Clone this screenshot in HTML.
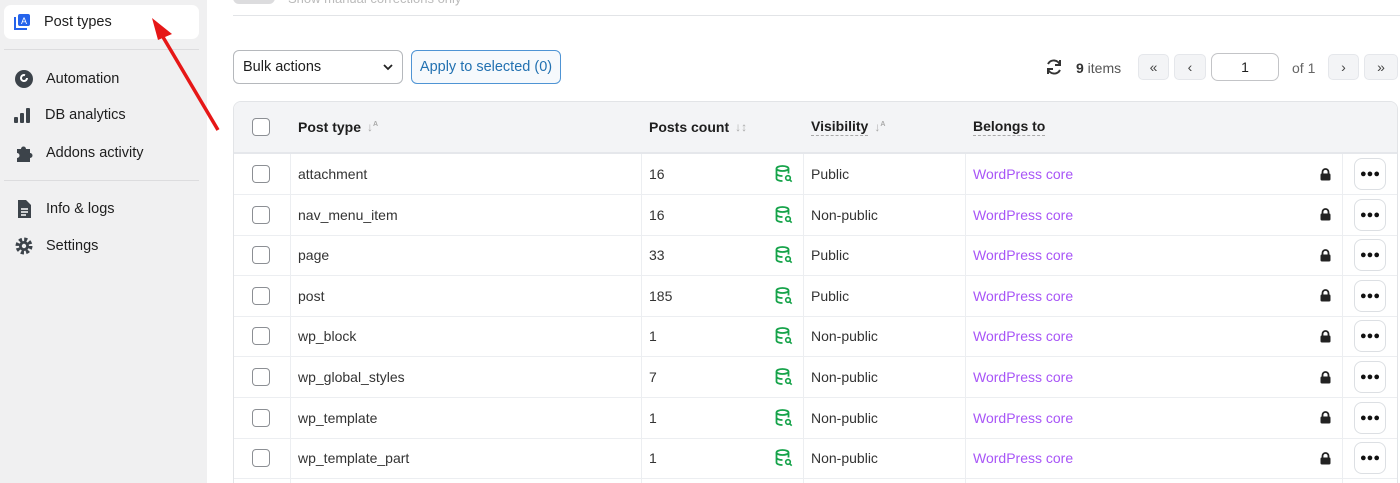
<!DOCTYPE html>
<html><head><meta charset="utf-8"><style>
*{box-sizing:border-box;margin:0;padding:0}
html,body{width:1400px;height:483px;overflow:hidden}
body{background:#fff;font-family:"Liberation Sans",sans-serif;color:#1e1e1e;font-size:14px;position:relative}
.sb{position:absolute;left:0;top:0;width:207px;height:483px;background:#f0f0f1;overflow:hidden}
.it{position:absolute;left:14px;display:flex;align-items:center;font-size:14.5px;color:#1e1e1e}
.it svg{margin-right:12px}
.sep{position:absolute;left:4px;width:195px;height:1px;background:#dcdcde}
.tbl{position:absolute;left:233px;top:101px;width:1165px;height:440px;border:1px solid #e2e4e7;border-radius:8px;overflow:hidden}
.hdr{position:absolute;left:0;top:0;width:100%;height:52px;background:#f3f4f6;border-bottom:2px solid #e5e7eb}
.row{position:absolute;left:0;width:100%;height:41px;border-bottom:1px solid #eceef1}
.c{position:absolute;top:0;height:100%;display:flex;align-items:center;font-size:14px;color:#333}
.cb{width:18px;height:18px;border:1.5px solid #8c8f94;border-radius:4px;background:#fff}
.th{font-weight:bold;color:#1e1e1e;font-size:14px}
.ul{border-bottom:1px dashed #aaa;padding-bottom:1px}
.vl{position:absolute;top:52px;bottom:0;width:1px;background:#eceef1}
.wp{color:#a855f7;font-weight:500}
.dots{position:absolute;left:1120px;width:32px;height:32px;border:1px solid #dcdfe3;border-radius:8px;display:flex;align-items:center;justify-content:center;font-weight:bold;font-size:11px;letter-spacing:0px;color:#111}
.pb{position:absolute;top:54px;height:26px;background:#f3f4f6;border:1px solid #e5e7eb;border-radius:5px;display:flex;align-items:center;justify-content:center;font-size:14px;color:#444}
</style></head><body>
<div class="sb">
 <div style="position:absolute;left:4px;top:5px;width:195px;height:34px;background:#fff;border-radius:7px"></div>
 <div class="it" style="top:13px"><svg width="18" height="18" viewBox="0 0 18 18"><rect x="4" y="1" width="12" height="12" rx="2" fill="#2563eb"/><text x="10" y="11" font-size="9" fill="#fff" text-anchor="middle" font-family="Liberation Sans">A</text><path d="M1 4v12h12" stroke="#2563eb" stroke-width="2" fill="none"/></svg><span>Post types</span></div>
 <div class="sep" style="top:49px"></div>
 <div class="it" style="top:69px"><svg width="20" height="20" viewBox="0 0 20 20"><circle cx="10" cy="10" r="9" fill="#3c434a"/><path d="M13 9a3 3 0 1 1-2-2.8" stroke="#fff" stroke-width="2" fill="none"/></svg><span>Automation</span></div>
 <div class="it" style="top:106px"><svg width="19" height="18" viewBox="0 0 19 18"><rect x="0" y="11" width="4" height="6" rx="1" fill="#3c434a"/><rect x="6" y="7" width="4" height="10" rx="1" fill="#3c434a"/><rect x="12" y="2" width="4" height="15" rx="1" fill="#3c434a"/></svg><span>DB analytics</span></div>
 <div class="it" style="top:143px"><svg width="20" height="20" viewBox="0 0 20 20"><path d="M3 6h4a2.5 2.5 0 1 1 5 0h4v4a2.5 2.5 0 1 1 0 5v4H3v-4a2.5 2.5 0 1 0 0-5z" fill="#3c434a"/></svg><span>Addons activity</span></div>
 <div class="sep" style="top:180px"></div>
 <div class="it" style="top:199px"><svg width="20" height="20" viewBox="0 0 20 20"><path d="M4 1h8l5 5v13H4z" fill="#3c434a"/><path d="M7 10h7M7 13h7M7 16h5" stroke="#fff" stroke-width="1.5"/></svg><span>Info &amp; logs</span></div>
 <div class="it" style="top:236px"><svg width="20" height="20" viewBox="0 0 20 20"><circle cx="10" cy="10" r="6.5" fill="none" stroke="#3c434a" stroke-width="4" stroke-dasharray="3 2.1"/><circle cx="10" cy="10" r="5" fill="#3c434a"/><circle cx="10" cy="10" r="2.2" fill="#f0f0f1"/></svg><span>Settings</span></div>
</div>
<div style="position:absolute;left:233px;top:-8px;width:42px;height:12px;border-radius:6px;background:#dcdcde"></div>
<div style="position:absolute;left:288px;top:-9px;font-size:13px;color:#bbb">Show manual corrections only</div>
<div style="position:absolute;left:233px;top:15px;width:1167px;height:1px;background:#e2e4e7"></div>
<div style="position:absolute;left:233px;top:50px;width:170px;height:34px;border:1px solid #b5b8bc;border-radius:6px;padding-left:9px;display:flex;align-items:center;font-size:14.5px">Bulk actions<svg style="position:absolute;right:9px;top:13px" width="10" height="7" viewBox="0 0 10 7"><path d="M1 1l4 4 4-4" stroke="#222" stroke-width="1.8" fill="none"/></svg></div>
<div style="position:absolute;left:411px;top:50px;width:150px;height:34px;border:1px solid #4f94d4;border-radius:6px;background:#f6f9fc;display:flex;align-items:center;justify-content:center;font-size:14.5px;color:#2271b1">Apply to selected (0)</div>
<svg style="position:absolute;left:1045px;top:58px" width="18" height="18" viewBox="0 0 18 18"><path d="M15 7A6.5 6.5 0 0 0 3 6M3 11a6.5 6.5 0 0 0 12 1" stroke="#333" stroke-width="2" fill="none"/><path d="M15 2v5h-5M3 16v-5h5" stroke="#333" stroke-width="2" fill="none"/></svg>
<div style="position:absolute;left:1076px;top:60px;font-size:14px;color:#555"><b style="color:#333">9</b> items</div>
<div class="pb" style="left:1138px;width:31px">«</div>
<div class="pb" style="left:1174px;width:32px">‹</div>
<div style="position:absolute;left:1211px;top:53px;width:68px;height:28px;border:1px solid #c3c4c7;border-radius:7px;text-align:center;line-height:26px;font-size:14px">1</div>
<div style="position:absolute;left:1292px;top:60px;font-size:14px;color:#666">of 1</div>
<div class="pb" style="left:1328px;width:31px">›</div>
<div class="pb" style="left:1364px;width:34px">»</div>
<div class="tbl">
 <div class="hdr">
  <div class="c" style="left:18px"><div class="cb"></div></div>
  <div class="c th" style="left:64px">Post type <span style="color:#aaa;font-size:12px;margin-left:6px">↓<sup style="font-size:7px">A</sup></span></div>
  <div class="c th" style="left:415px">Posts count <span style="color:#aaa;font-size:12px;margin-left:6px">↓↕</span></div>
  <div class="c th" style="left:577px"><span class="ul">Visibility</span> <span style="color:#aaa;font-size:12px;margin-left:6px">↓<sup style="font-size:7px">A</sup></span></div>
  <div class="c th" style="left:739px"><span class="ul">Belongs to</span></div>
 </div>
 <div class="vl" style="left:56px"></div><div class="vl" style="left:407px"></div><div class="vl" style="left:569px"></div><div class="vl" style="left:731px"></div><div class="vl" style="left:1108px"></div>
 <div id="rows"></div>
</div>
<script>
var d=[["attachment",16,"Public"],["nav_menu_item",16,"Non-public"],["page",33,"Public"],["post",185,"Public"],["wp_block",1,"Non-public"],["wp_global_styles",7,"Non-public"],["wp_template",1,"Non-public"],["wp_template_part",1,"Non-public"],["wp_navigation",1,"Non-public"]];
var h="";d.forEach(function(r,i){var t=52+i*40.6;
h+='<div class="row" style="top:'+t+'px"><div class="c" style="left:18px"><div class="cb"></div></div><div class="c" style="left:64px">'+r[0]+'</div><div class="c" style="left:415px">'+r[1]+'</div><div class="c" style="left:541px"><svg width="18" height="18" viewBox="0 0 18 18"><ellipse cx="7.5" cy="3.5" rx="6" ry="2.5" fill="none" stroke="#16a34a" stroke-width="1.8"/><path d="M1.5 3.5v10c0 1.4 2.7 2.5 6 2.5M13.5 3.5v5M1.5 8.5c0 1.4 2.7 2.5 6 2.5" fill="none" stroke="#16a34a" stroke-width="1.8"/><circle cx="13" cy="13" r="2.3" fill="none" stroke="#16a34a" stroke-width="1.6"/><path d="M14.7 14.7l2 2" stroke="#16a34a" stroke-width="1.6"/></svg></div><div class="c" style="left:577px">'+r[2]+'</div><div class="c wp" style="left:739px">WordPress core</div><div class="c" style="left:1086px"><svg width="11" height="13" viewBox="0 0 11 13"><path d="M2.5 6V4a3 3 0 0 1 6 0v2" stroke="#222" stroke-width="1.8" fill="none"/><rect x="0.5" y="5.5" width="10" height="7" rx="1.2" fill="#222"/></svg></div><div class="dots" style="top:4px">●●●</div></div>';});
document.getElementById("rows").innerHTML=h;
</script>
<svg style="position:absolute;left:0;top:0" width="260" height="200"><path d="M218 130L160 32" stroke="#e61717" stroke-width="3.5"/><path d="M152 18L172 34L158 40Z" fill="#e61717"/></svg>
</body></html>
